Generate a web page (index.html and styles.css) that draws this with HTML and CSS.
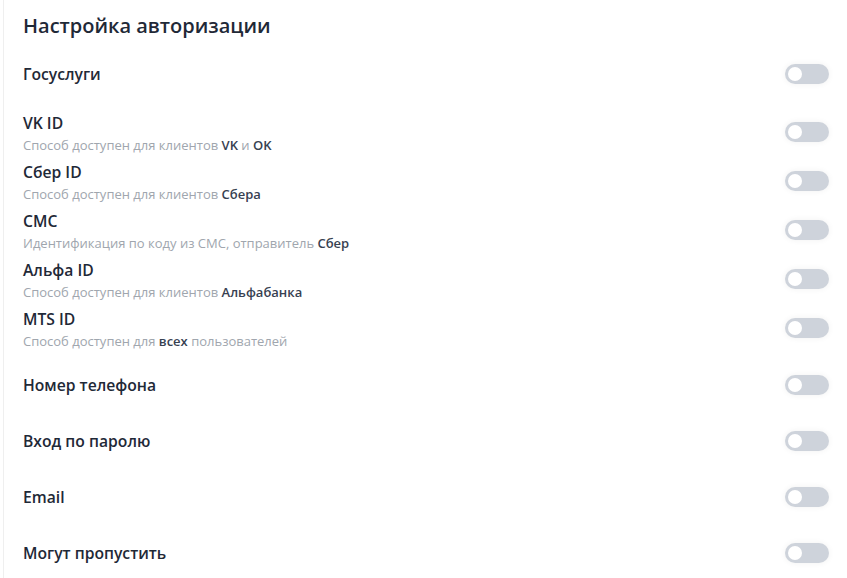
FILE: index.html
```html
<!DOCTYPE html>
<html lang="ru">
<head>
    <meta charset="UTF-8">
    <meta name="viewport" content="width=device-width, initial-scale=1.0">
    <title>Настройка авторизации</title>
    <link rel="stylesheet" href="styles.css">
</head>
<body>
    <div class="panel">
        <h2 class="panel-title">Настройка авторизации</h2>

        <div class="row">
            <span class="label">Госуслуги</span>
            <button type="button" class="toggle"></button>
        </div>

        <div class="group">
            <div class="row row-sub">
                <div class="text">
                    <div class="label">VK ID</div>
                    <div class="hint">Способ доступен для клиентов <b>VK</b> и <b>OK</b></div>
                </div>
                <button type="button" class="toggle"></button>
            </div>
            <div class="row row-sub">
                <div class="text">
                    <div class="label">Сбер ID</div>
                    <div class="hint">Способ доступен для клиентов <b>Сбера</b></div>
                </div>
                <button type="button" class="toggle"></button>
            </div>
            <div class="row row-sub">
                <div class="text">
                    <div class="label">СМС</div>
                    <div class="hint">Идентификация по коду из СМС, отправитель <b>Сбер</b></div>
                </div>
                <button type="button" class="toggle"></button>
            </div>
            <div class="row row-sub">
                <div class="text">
                    <div class="label">Альфа ID</div>
                    <div class="hint">Способ доступен для клиентов <b>Альфабанка</b></div>
                </div>
                <button type="button" class="toggle"></button>
            </div>
            <div class="row row-sub">
                <div class="text">
                    <div class="label">MTS ID</div>
                    <div class="hint">Способ доступен для <b>всех</b> пользователей</div>
                </div>
                <button type="button" class="toggle"></button>
            </div>
        </div>

        <div class="row">
            <span class="label">Номер телефона</span>
            <button type="button" class="toggle"></button>
        </div>
        <div class="row">
            <span class="label">Вход по паролю</span>
            <button type="button" class="toggle"></button>
        </div>
        <div class="row">
            <span class="label">Email</span>
            <button type="button" class="toggle"></button>
        </div>
        <div class="row">
            <span class="label">Могут пропустить</span>
            <button type="button" class="toggle"></button>
        </div>
    </div>
</body>
</html>
```

FILE: styles.css
```css
*{
    margin: 0;
    padding: 0;
    box-sizing: border-box;
}
body{
    background-color: #fff;
    font-family: "Open Sans", "Noto Sans", sans-serif;
    color: #1f2937;
    overflow: hidden;
}
.panel{
    margin-left: 3px;
    min-height: 100vh;
    border-left: 1px solid #efefef;
    padding: 13px 18px 0 19px;
}
.panel-title{
    font-size: 20px;
    font-weight: 600;
    line-height: 26px;
    margin-bottom: 7px;
    color: #1f2937;
}
.row{
    display: flex;
    justify-content: space-between;
    align-items: center;
    height: 56px;
}
.group{
    margin: 5px 0;
}
.row-sub{
    height: 49px;
}
.row-sub .text{
    padding-top: 4px;
}
.label{
    font-size: 15.7px;
    font-weight: 600;
    line-height: 22px;
    color: #1f2937;
}
.hint{
    font-size: 13px;
    font-weight: 400;
    line-height: 22px;
    color: #a0a6ae;
}
.hint b{
    font-weight: 600;
    color: #374151;
}
.toggle{
    position: relative;
    width: 44px;
    height: 20px;
    border: none;
    border-radius: 10px;
    background-color: #ced3db;
    box-shadow: 0 0 6px rgba(0, 0, 0, 0.06);
    cursor: pointer;
}
.toggle::after{
    content: '';
    position: absolute;
    left: 3px;
    top: 3px;
    width: 14px;
    height: 14px;
    border-radius: 50%;
    background-color: #fff;
}
```
